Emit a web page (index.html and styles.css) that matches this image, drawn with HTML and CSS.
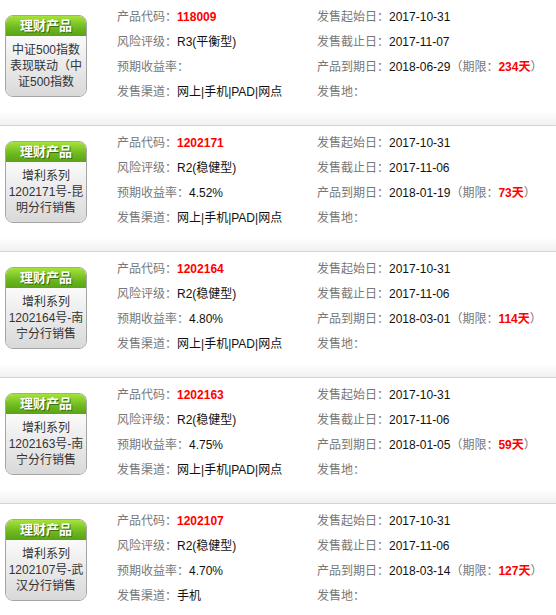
FILE: index.html
```html
<!DOCTYPE html>
<html lang="zh-CN">
<head>
    <meta charset="UTF-8">
    <title>理财产品列表</title>
    <link rel="stylesheet" href="styles.css">
</head>
<body>
    <div class="list">

        <div class="item">
            <div class="item-main">
                <div class="badge">
                    <div class="badge-head">理财产品</div>
                    <div class="badge-body">中证500指数表现联动（中证500指数</div>
                </div>
                <div class="info">
                    <div class="row"><span class="label">产品代码：</span><span class="code">118009</span></div>
                    <div class="row"><span class="label">发售起始日：</span><span class="val">2017-10-31</span></div>
                    <div class="row"><span class="label">风险评级：</span><span class="val">R3(平衡型)</span></div>
                    <div class="row"><span class="label">发售截止日：</span><span class="val">2017-11-07</span></div>
                    <div class="row"><span class="label">预期收益率：</span><span class="val"></span></div>
                    <div class="row"><span class="label">产品到期日：</span><span class="val">2018-06-29</span><span class="label">（期限：</span><span class="days">234天</span><span class="label">）</span></div>
                    <div class="row"><span class="label">发售渠道：</span><span class="val">网上|手机|PAD|网点</span></div>
                    <div class="row"><span class="label">发售地：</span></div>
                </div>
            </div>
            <div class="sep"></div>
        </div>

        <div class="item">
            <div class="item-main">
                <div class="badge">
                    <div class="badge-head">理财产品</div>
                    <div class="badge-body">增利系列1202171号-昆明分行销售</div>
                </div>
                <div class="info">
                    <div class="row"><span class="label">产品代码：</span><span class="code">1202171</span></div>
                    <div class="row"><span class="label">发售起始日：</span><span class="val">2017-10-31</span></div>
                    <div class="row"><span class="label">风险评级：</span><span class="val">R2(稳健型)</span></div>
                    <div class="row"><span class="label">发售截止日：</span><span class="val">2017-11-06</span></div>
                    <div class="row"><span class="label">预期收益率：</span><span class="val">4.52%</span></div>
                    <div class="row"><span class="label">产品到期日：</span><span class="val">2018-01-19</span><span class="label">（期限：</span><span class="days">73天</span><span class="label">）</span></div>
                    <div class="row"><span class="label">发售渠道：</span><span class="val">网上|手机|PAD|网点</span></div>
                    <div class="row"><span class="label">发售地：</span></div>
                </div>
            </div>
            <div class="sep"></div>
        </div>

        <div class="item">
            <div class="item-main">
                <div class="badge">
                    <div class="badge-head">理财产品</div>
                    <div class="badge-body">增利系列1202164号-南宁分行销售</div>
                </div>
                <div class="info">
                    <div class="row"><span class="label">产品代码：</span><span class="code">1202164</span></div>
                    <div class="row"><span class="label">发售起始日：</span><span class="val">2017-10-31</span></div>
                    <div class="row"><span class="label">风险评级：</span><span class="val">R2(稳健型)</span></div>
                    <div class="row"><span class="label">发售截止日：</span><span class="val">2017-11-06</span></div>
                    <div class="row"><span class="label">预期收益率：</span><span class="val">4.80%</span></div>
                    <div class="row"><span class="label">产品到期日：</span><span class="val">2018-03-01</span><span class="label">（期限：</span><span class="days">114天</span><span class="label">）</span></div>
                    <div class="row"><span class="label">发售渠道：</span><span class="val">网上|手机|PAD|网点</span></div>
                    <div class="row"><span class="label">发售地：</span></div>
                </div>
            </div>
            <div class="sep"></div>
        </div>

        <div class="item">
            <div class="item-main">
                <div class="badge">
                    <div class="badge-head">理财产品</div>
                    <div class="badge-body">增利系列1202163号-南宁分行销售</div>
                </div>
                <div class="info">
                    <div class="row"><span class="label">产品代码：</span><span class="code">1202163</span></div>
                    <div class="row"><span class="label">发售起始日：</span><span class="val">2017-10-31</span></div>
                    <div class="row"><span class="label">风险评级：</span><span class="val">R2(稳健型)</span></div>
                    <div class="row"><span class="label">发售截止日：</span><span class="val">2017-11-06</span></div>
                    <div class="row"><span class="label">预期收益率：</span><span class="val">4.75%</span></div>
                    <div class="row"><span class="label">产品到期日：</span><span class="val">2018-01-05</span><span class="label">（期限：</span><span class="days">59天</span><span class="label">）</span></div>
                    <div class="row"><span class="label">发售渠道：</span><span class="val">网上|手机|PAD|网点</span></div>
                    <div class="row"><span class="label">发售地：</span></div>
                </div>
            </div>
            <div class="sep"></div>
        </div>

        <div class="item">
            <div class="item-main">
                <div class="badge">
                    <div class="badge-head">理财产品</div>
                    <div class="badge-body">增利系列1202107号-武汉分行销售</div>
                </div>
                <div class="info">
                    <div class="row"><span class="label">产品代码：</span><span class="code">1202107</span></div>
                    <div class="row"><span class="label">发售起始日：</span><span class="val">2017-10-31</span></div>
                    <div class="row"><span class="label">风险评级：</span><span class="val">R2(稳健型)</span></div>
                    <div class="row"><span class="label">发售截止日：</span><span class="val">2017-11-06</span></div>
                    <div class="row"><span class="label">预期收益率：</span><span class="val">4.70%</span></div>
                    <div class="row"><span class="label">产品到期日：</span><span class="val">2018-03-14</span><span class="label">（期限：</span><span class="days">127天</span><span class="label">）</span></div>
                    <div class="row"><span class="label">发售渠道：</span><span class="val">手机</span></div>
                    <div class="row"><span class="label">发售地：</span></div>
                </div>
            </div>
            <div class="sep"></div>
        </div>

    </div>
</body>
</html>
```

FILE: styles.css
```css
body {
    margin: 0;
    padding: 0;
    background: #fff;
    font-family: "Liberation Sans", "Noto Sans CJK SC", sans-serif;
    font-size: 12px;
    color: #222;
}

.list {
    width: 556px;
}

.item-main {
    display: flex;
    height: 108px;
    padding: 5px 0 0 5px;
}

/* product badge on the left */
.badge {
    width: 80px;
    height: 80px;
    margin-top: 10px;
    border: 1px solid #a5a5a5;
    border-radius: 8px;
    overflow: hidden;
    display: flex;
    flex-direction: column;
    flex-shrink: 0;
}

.badge-head {
    height: 20px;
    line-height: 20px;
    text-align: center;
    color: #fff;
    font-size: 13px;
    font-weight: bold;
    text-shadow: 1px 1px 0 #3c6e0c;
    background: linear-gradient(to bottom, #a6e23a, #6cb81f 60%, #5aa314);
}

.badge-body {
    flex: 1;
    display: flex;
    align-items: center;
    justify-content: center;
    text-align: center;
    padding: 0;
    line-height: 16px;
    color: #333;
    background: linear-gradient(to bottom, #fafafa, #d9d9d9);
}

/* info columns */
.info {
    margin-left: 30px;
    display: grid;
    grid-template-columns: 200px 1fr;
    grid-auto-rows: 25px;
    align-content: start;
}

.row {
    line-height: 25px;
    white-space: nowrap;
}

.label {
    color: #777;
}

.val {
    color: #111;
}

.code {
    color: #f00;
    font-weight: bold;
}

.days {
    color: #f00;
    font-weight: bold;
}

.sep {
    height: 12px;
    background: linear-gradient(to bottom, #fdfdfd, #f1f1f1);
    border-bottom: 1px solid #d4d4d4;
}
```
